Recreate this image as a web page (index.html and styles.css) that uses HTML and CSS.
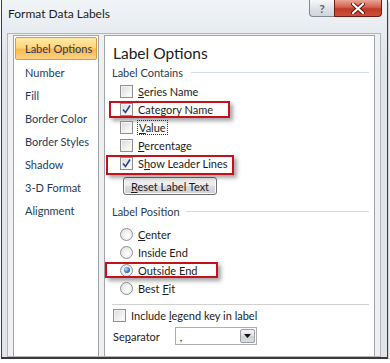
FILE: index.html
```html
<!DOCTYPE html>
<html lang="en">
<head>
    <meta charset="UTF-8">
    <title>Format Data Labels</title>
    <link rel="stylesheet" href="styles.css">
</head>
<body>
    <div class="window">
        <div class="titlebar">
            <span class="title">Format Data Labels</span>
            <div class="caption">
                <span class="cap-btn help">?</span>
                <span class="cap-btn close">
                    <svg width="14" height="11" viewBox="0 0 14 11">
                        <path d="M2 1 L12 10 M12 1 L2 10" stroke="#5a140e" stroke-width="4" stroke-linecap="round"/>
                        <path d="M2 1 L12 10 M12 1 L2 10" stroke="#fff" stroke-width="2.2" stroke-linecap="round"/>
                    </svg>
                </span>
            </div>
        </div>

        <div class="client">
            <ul class="nav">
                <li class="active">Label Options</li>
                <li>Number</li>
                <li>Fill</li>
                <li>Border Color</li>
                <li>Border Styles</li>
                <li>Shadow</li>
                <li>3-D Format</li>
                <li>Alignment</li>
            </ul>

            <div class="pane">
                <h2>Label Options</h2>

                <div class="group">Label Contains</div>
                <div class="row"><span class="check"></span><span><u>S</u>eries Name</span></div>
                <div class="row">
                    <span class="check on"><svg width="11" height="11" viewBox="0 0 11 11"><path d="M2 5.5 L4.5 8.5 L9 1.5" fill="none" stroke="#2c4586" stroke-width="1.6"/></svg></span>
                    <span>Cate<u>g</u>ory Name</span>
                    <span class="mark mark-cat"></span>
                </div>
                <div class="row"><span class="check"></span><span class="focus"><u>V</u>alue</span></div>
                <div class="row"><span class="check"></span><span><u>P</u>ercentage</span></div>
                <div class="row">
                    <span class="check on"><svg width="11" height="11" viewBox="0 0 11 11"><path d="M2 5.5 L4.5 8.5 L9 1.5" fill="none" stroke="#2c4586" stroke-width="1.6"/></svg></span>
                    <span>S<u>h</u>ow Leader Lines</span>
                    <span class="mark mark-lead"></span>
                </div>
                <button class="btn"><u>R</u>eset Label Text</button>

                <div class="group group-pos">Label Position</div>
                <div class="row"><span class="radio"></span><span><u>C</u>enter</span></div>
                <div class="row"><span class="radio"></span><span>Inside End</span></div>
                <div class="row">
                    <span class="radio on"></span>
                    <span><u>O</u>utside End</span>
                    <span class="mark mark-out"></span>
                </div>
                <div class="row"><span class="radio"></span><span>Best <u>F</u>it</span></div>

                <div class="divider"></div>

                <div class="row row-flat"><span class="check"></span><span>Include <u>l</u>egend key in label</span></div>
                <div class="sep-row">
                    <span>Se<u>p</u>arator</span>
                    <div class="combo">
                        <span class="combo-val">,</span>
                        <span class="combo-btn"><svg width="7" height="4" viewBox="0 0 7 4"><path d="M0 0 H7 L3.5 4 Z" fill="#111"/></svg></span>
                    </div>
                </div>
            </div>
        </div>
    </div>
</body>
</html>
```

FILE: styles.css
```css
body {
    margin: 0;
    background: #fff;
    font-family: Lato, "Noto Sans", sans-serif;
    font-size: 11px;
    color: #1b1b1b;
}
.window {
    margin-left: 1px;
    width: 385px;
    height: 357px;
    display: flex;
    flex-direction: column;
    background: linear-gradient(#f1f4f7, #dfe5eb 60px, #dfe5eb);
    border: 1px solid #3c3c3c;
    border-top: none;
    border-bottom: 2px solid #3a3a3a;
    box-shadow: 1px 2px 2px rgba(0,0,0,0.25);
}
.titlebar {
    height: 33px;
    display: flex;
    align-items: flex-start;
    justify-content: space-between;
    flex-shrink: 0;
}
.title {
    margin: 6px 0 0 6px;
    font-size: 12px;
    color: #1c1c1c;
}
.caption {
    display: flex;
    margin-right: 5px;
}
.cap-btn {
    height: 17px;
    display: flex;
    align-items: center;
    justify-content: center;
    box-sizing: border-box;
}
.help {
    width: 25px;
    border: 1px solid #7f8790;
    border-top: none;
    border-right: none;
    border-radius: 0 0 0 4px;
    background: linear-gradient(#f7f8fa, #dde1e6 55%, #cfd5dc);
    color: #5d636b;
    font-weight: bold;
    font-size: 12px;
}
.close {
    width: 48px;
    border: 1px solid #6e1c14;
    border-top: none;
    border-radius: 0 0 4px 0;
    background: linear-gradient(#e9a596, #d2604e 45%, #c03a28 55%, #c9503c);
}
.client {
    flex: 1;
    display: flex;
    gap: 5px;
    margin: 0 6px 0 5px;
    padding: 1px 5px 0 5px;
    background: #f0f0f0;
    border: 1px solid #aeb6be;
    border-bottom: 1px solid #b5b5b5;
    min-height: 0;
}
.nav {
    list-style: none;
    margin: 0;
    padding: 1px 1px 0 1px;
    width: 82px;
    background: #fff;
    border: 1px solid #a0a4aa;
    border-bottom: none;
    color: #1e395b;
}
.nav li {
    height: 23px;
    line-height: 22px;
    padding-left: 10px;
    white-space: nowrap;
}
.nav li.active {
    height: 21px;
    line-height: 21px;
    padding-left: 9px;
    margin-bottom: 2px;
    border: 1px solid #d59b44;
    border-radius: 2px;
    background: linear-gradient(#ffe9a8, #ffd679 45%, #fbb94b 55%, #fdd286);
}
.pane {
    flex: 1;
    padding: 0 5px 0 0;
    background: #fff;
    border: 1px solid #a0a4aa;
    border-bottom: none;
}
.pane h2 {
    margin: 6px 0 0 8px;
    font-size: 15.5px;
    font-weight: normal;
    line-height: 22px;
    color: #1b1b1b;
}
.group {
    display: flex;
    align-items: center;
    gap: 8px;
    height: 16px;
    margin-left: 7px;
    color: #2b3a4c;
}
.group::after {
    content: "";
    flex: 1;
    border-top: 1px solid #d3dde6;
}
.row {
    position: relative;
    display: flex;
    align-items: center;
    gap: 5px;
    height: 18px;
    padding-left: 15px;
}
.group + .row {
    margin-top: 2px;
}
.check {
    width: 13px;
    height: 13px;
    box-sizing: border-box;
    border: 1px solid #8e8f8f;
    background: linear-gradient(135deg, #d8d8d8, #f6f6f6 70%, #fff);
    box-shadow: inset 0 0 0 1px #f4f4f4;
    display: flex;
    align-items: center;
    justify-content: center;
}
.check svg {
    display: block;
}
.radio {
    width: 13px;
    height: 13px;
    box-sizing: border-box;
    border: 1px solid #8e8f8f;
    border-radius: 50%;
    background: radial-gradient(circle at 60% 60%, #fff, #dcdcdc);
    display: flex;
    align-items: center;
    justify-content: center;
}
.radio.on::after {
    content: "";
    width: 6px;
    height: 6px;
    border-radius: 50%;
    background: radial-gradient(circle at 35% 35%, #bfe3ff, #2e7fc2 55%, #0d3e6a);
}
.focus {
    outline: 1px dotted #333;
    outline-offset: 0;
    padding: 0 1px;
}
.mark {
    position: absolute;
    border: 2px solid #c4121c;
    box-shadow: 3px 3px 4px rgba(0,0,0,0.35);
    pointer-events: none;
}
.mark-cat {
    left: 4px;
    top: 1px;
    width: 117px;
    height: 13px;
}
.mark-lead {
    left: 1px;
    top: 1px;
    width: 124px;
    height: 16px;
}
.mark-out {
    left: 0;
    top: 1px;
    width: 109px;
    height: 12px;
}
.btn {
    display: block;
    margin: 5px 0 0 18px;
    width: 94px;
    height: 18px;
    padding: 0;
    font: inherit;
    color: #1b1b1b;
    border: 1px solid #707070;
    border-radius: 3px;
    background: linear-gradient(#f2f2f2, #ebebeb 50%, #dddddd 50%, #cfcfcf);
    box-shadow: inset 0 0 0 1px #fbfbfb;
}
.group-pos {
    margin-top: 8px;
    gap: 6px;
}
.group-pos + .row {
    margin-top: 6px;
}
.divider {
    margin: 7px 0 0 7px;
    border-top: 1px solid #d0d0d0;
}
.row-flat {
    padding-left: 8px;
    margin-top: 1px;
}
.sep-row {
    display: flex;
    align-items: center;
    gap: 15px;
    margin: 3px 0 0 8px;
}
.combo {
    width: 82px;
    height: 18px;
    box-sizing: border-box;
    border: 1px solid #abadb3;
    display: flex;
    align-items: center;
    justify-content: space-between;
}
.combo-val {
    padding-left: 4px;
}
.combo-btn {
    width: 15px;
    height: 14px;
    margin-right: 1px;
    box-sizing: border-box;
    border: 1px solid #9aa0a8;
    border-radius: 2px;
    background: linear-gradient(#f4f4f4, #e0e0e0 50%, #d0d0d0 50%, #dcdcdc);
    display: flex;
    align-items: center;
    justify-content: center;
}
```
